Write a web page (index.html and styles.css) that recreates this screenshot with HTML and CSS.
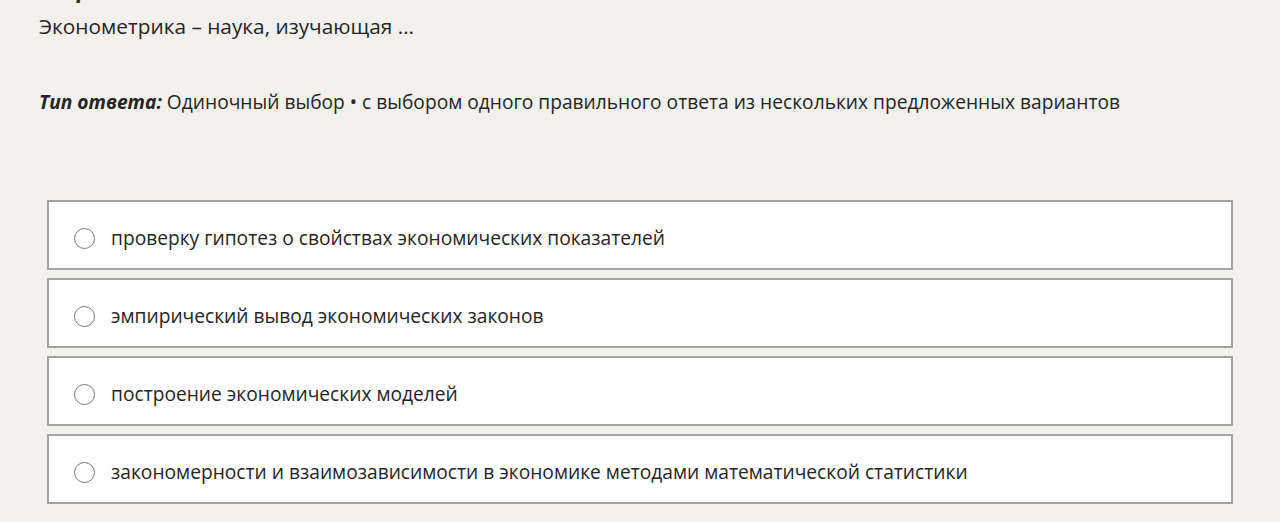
FILE: index.html
```html
<!DOCTYPE html>
<html lang="ru">
<head>
    <meta charset="UTF-8">
    <meta name="viewport" content="width=device-width, initial-scale=1.0">
    <title>Вопрос</title>
    <link rel="stylesheet" href="styles.css">
</head>
<body>
    <div class="question">
        <div class="q-title">Вопрос</div>
        <div class="q-text">Эконометрика – наука, изучающая ...</div>
        <div class="q-type"><b><i>Тип ответа:</i></b> Одиночный выбор • с выбором одного правильного ответа из нескольких предложенных вариантов</div>

        <div class="answers">
            <label class="answer">
                <span class="radio"></span>
                <span class="answer-text">проверку гипотез о свойствах экономических показателей</span>
            </label>
            <label class="answer">
                <span class="radio"></span>
                <span class="answer-text">эмпирический вывод экономических законов</span>
            </label>
            <label class="answer">
                <span class="radio"></span>
                <span class="answer-text">построение экономических моделей</span>
            </label>
            <label class="answer">
                <span class="radio"></span>
                <span class="answer-text">закономерности и взаимозависимости в экономике методами математической статистики</span>
            </label>
        </div>
    </div>
</body>
</html>
```

FILE: styles.css
```css
body{
    margin: 0;
    background-color: #f2f1ed;
    font-family: "Open Sans", "Noto Sans", sans-serif;
    color: #252525;
    overflow: hidden;
}
.question{
    margin-top: -24px;
    padding: 0 47px 0 39px;
}
.q-title{
    font-size: 21px;
    font-weight: bold;
    font-style: italic;
    line-height: 28px;
}
.q-text{
    font-size: 20.8px;
    line-height: 28px;
    margin-top: 8px;
}
.q-type{
    font-size: 19.2px;
    line-height: 28px;
    margin-top: 48px;
}
.answers{
    margin-top: 84px;
    margin-left: 8px;
    display: flex;
    flex-direction: column;
    gap: 8px;
}
.answer{
    height: 66px;
    background-color: #fff;
    border: 2px solid #a3a3a3;
    display: flex;
    align-items: center;
    padding-left: 25px;
    font-size: 19.2px;
    cursor: pointer;
}
.answer-text{
    margin-top: 4px;
}
.radio{
    width: 19px;
    height: 19px;
    border: 1px solid #777;
    border-radius: 50%;
    margin-right: 16px;
    margin-top: 6px;
    flex-shrink: 0;
}
```
